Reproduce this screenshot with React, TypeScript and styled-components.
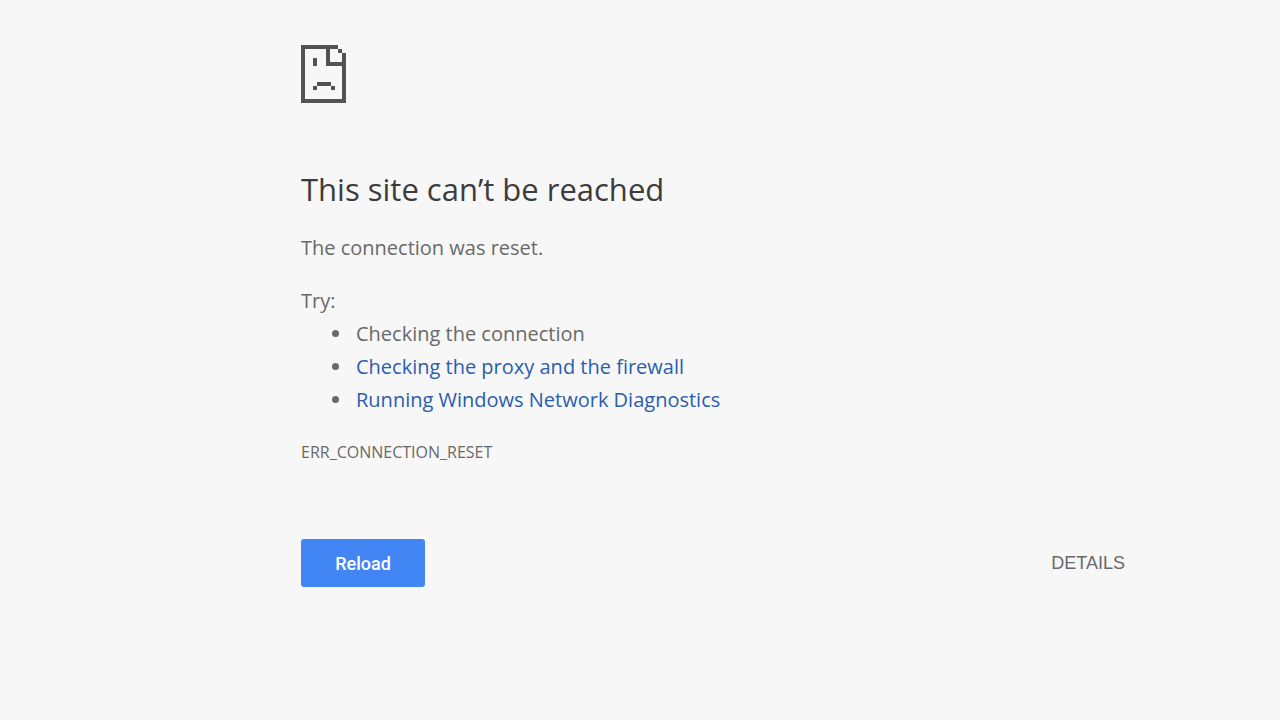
import React from "react";
import styled, { createGlobalStyle } from "styled-components";

const GlobalStyle = createGlobalStyle`
  body {
    margin: 0;
    background: #f7f7f7;
    color: #696969;
    font-family: "Segoe UI", "Open Sans", "Noto Sans", sans-serif;
    font-size: 20px;
    line-height: 33px;
  }
`;

const Page = styled.main`
  box-sizing: border-box;
  padding: 45px 155px 40px 301px;
`;

const SadPageIcon = styled.svg`
  display: block;
  width: 45px;
  height: 58px;
  fill: #535353;
`;

const Title = styled.h1`
  margin: 64px 0 0;
  color: #3c3c3c;
  font-size: 31px;
  font-weight: 400;
  line-height: 44px;
`;

const Paragraph = styled.p`
  margin: 20px 0 0;
`;

const Suggestions = styled.ul`
  margin: 0;
  padding: 0 0 0 52px;

  li {
    padding-left: 3px;
  }
`;

const Link = styled.a`
  color: #2a5db0;
  text-decoration: none;
`;

const ErrorCode = styled.p`
  margin: 20px 0 0;
  font-size: 16px;
`;

const Actions = styled.div`
  display: flex;
  align-items: center;
  justify-content: space-between;
  margin-top: 70px;
`;

const Button = styled.button<{ $primary?: boolean }>`
  height: 48px;
  min-width: ${(p) => (p.$primary ? "124px" : "0")};
  padding: ${(p) => (p.$primary ? "0 32px" : "0")};
  border: 0;
  border-radius: 3px;
  background: ${(p) => (p.$primary ? "#4285f4" : "transparent")};
  color: ${(p) => (p.$primary ? "#fff" : "#696969")};
  font-family: ${(p) => (p.$primary ? "Roboto" : '"Liberation Sans"')}, Arial, sans-serif;
  font-size: 18px;
  font-weight: ${(p) => (p.$primary ? 500 : 400)};
  cursor: pointer;
`;

export default function App() {
  return (
    <>
      <GlobalStyle />
      <Page>
        <SadPageIcon viewBox="0 0 45 58" shapeRendering="crispEdges" aria-hidden="true">
          <path d="M0 0H37V4H29V17H41V8H45V58H0ZM4 4V54H41V21H25V4Z" fillRule="evenodd" />
          <path d="M37 4h4v4h-4zM12 13h4v8h-4zM16 37h14v4H16zM12 41h4v4h-4zM30 41h4v4h-4z" />
        </SadPageIcon>
        <Title>This site can’t be reached</Title>
        <Paragraph>The connection was reset.</Paragraph>
        <Paragraph>Try:</Paragraph>
        <Suggestions>
          <li>Checking the connection</li>
          <li>
            <Link href="#proxy">Checking the proxy and the firewall</Link>
          </li>
          <li>
            <Link href="#diagnostics">Running Windows Network Diagnostics</Link>
          </li>
        </Suggestions>
        <ErrorCode>ERR_CONNECTION_RESET</ErrorCode>
        <Actions>
          <Button type="button" $primary>
            Reload
          </Button>
          <Button type="button">DETAILS</Button>
        </Actions>
      </Page>
    </>
  );
}
